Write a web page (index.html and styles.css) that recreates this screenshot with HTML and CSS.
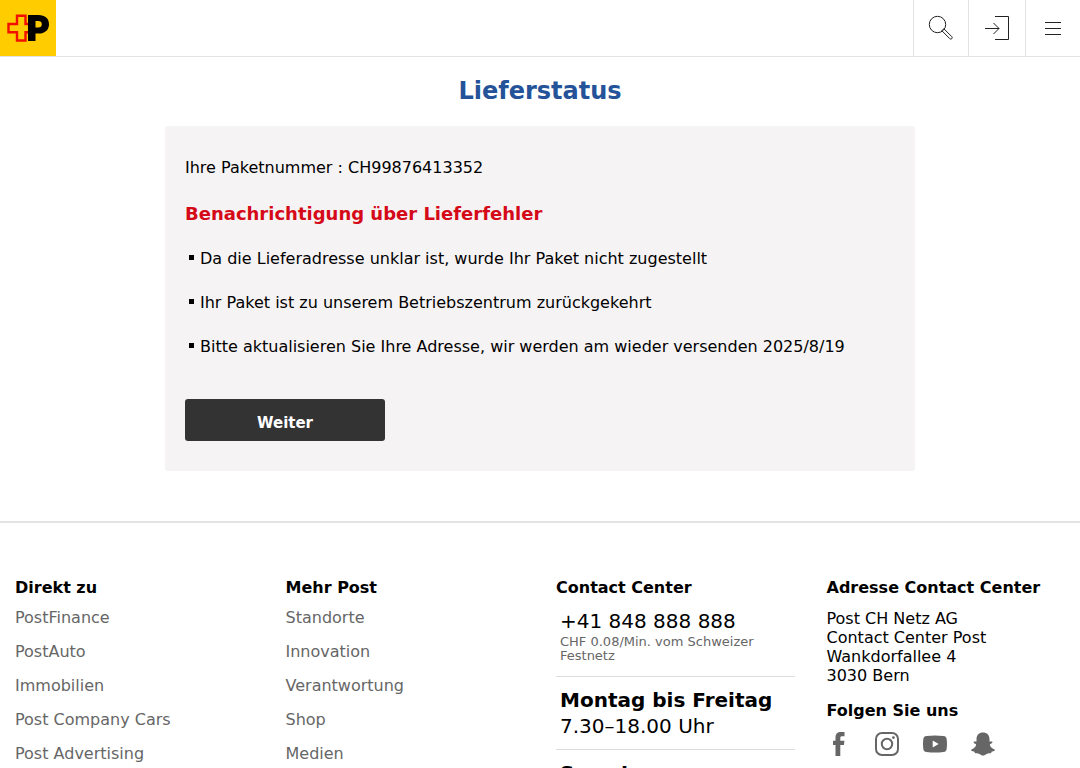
FILE: index.html
```html
<!DOCTYPE html>
<html lang="de">
<head>
<meta charset="UTF-8">
<meta name="viewport" content="width=device-width, initial-scale=1.0">
<title>Lieferstatus</title>
<link rel="stylesheet" href="styles.css">
</head>
<body>
<header class="header">
    <a class="logo" href="#" aria-label="Startseite">
        <svg width="56" height="56" viewBox="0 0 56 56">
            <path class="logo-cross" d="M28 24h-2.500v-8.200h-8.500V24H8.500v8.200H17v8.300h8.500v-8.300H28"/>
            <path d="M28 15h10.500c6.500 0 10.500 3.500 10.500 9.200S45 33.500 38.500 33.500H35.500V41H28zM35.500 21v6.500h2.700c2.300 0 3.600-1.200 3.600-3.300S40.500 21 38.200 21z" fill="#000" fill-rule="evenodd"/>
        </svg>
    </a>
    <nav class="tools">
        <button class="tool" type="button" aria-label="Suche">
            <svg width="32" height="32" viewBox="0 0 32 32">
                <circle cx="12.500" cy="12.500" r="8.200"/>
                <path d="M17 18.500l1.800-1.800 8 8c1.300 1.300-.7 3.300-2 2l-8-8z"/>
            </svg>
        </button>
        <button class="tool tool-login" type="button" aria-label="Login">
            <svg width="32" height="32" viewBox="0 0 32 32">
                <path d="M14 4.500h13.500v23H14M4 16.500h14M12.500 11l5.500 5.500-5.500 5.500"/>
            </svg>
        </button>
        <button class="tool" type="button" aria-label="Menü">
            <svg width="32" height="32" viewBox="0 0 32 32">
                <path d="M8 10.500h16M8 16.500h16M8 22.500h16"/>
            </svg>
        </button>
    </nav>
</header>

<main class="main">
    <h1 class="title">Lieferstatus</h1>
    <section class="card">
        <p class="number">Ihre Paketnummer : CH99876413352</p>
        <h2 class="error">Benachrichtigung über Lieferfehler</h2>
        <ul class="reasons">
            <li>Da die Lieferadresse unklar ist, wurde Ihr Paket nicht zugestellt</li>
            <li>Ihr Paket ist zu unserem Betriebszentrum zurückgekehrt</li>
            <li>Bitte aktualisieren Sie Ihre Adresse, wir werden am wieder versenden 2025/8/19</li>
        </ul>
        <button class="next" type="button">Weiter</button>
    </section>
</main>

<footer class="footer">
    <div class="column">
        <h3>Direkt zu</h3>
        <ul class="links">
            <li><a href="#">PostFinance</a></li>
            <li><a href="#">PostAuto</a></li>
            <li><a href="#">Immobilien</a></li>
            <li><a href="#">Post Company Cars</a></li>
            <li><a href="#">Post Advertising</a></li>
        </ul>
    </div>
    <div class="column">
        <h3>Mehr Post</h3>
        <ul class="links">
            <li><a href="#">Standorte</a></li>
            <li><a href="#">Innovation</a></li>
            <li><a href="#">Verantwortung</a></li>
            <li><a href="#">Shop</a></li>
            <li><a href="#">Medien</a></li>
        </ul>
    </div>
    <div class="column">
        <h3>Contact Center</h3>
        <div class="contact">
            <p>+41 848 888 888</p>
            <small>CHF 0.08/Min. vom Schweizer Festnetz</small>
        </div>
        <div class="contact">
            <strong>Montag bis Freitag</strong>
            <p>7.30–18.00 Uhr</p>
        </div>
        <div class="contact">
            <strong>Samstag</strong>
        </div>
    </div>
    <div class="column">
        <h3>Adresse Contact Center</h3>
        <address class="address">
            Post CH Netz AG<br>
            Contact Center Post<br>
            Wankdorfallee 4<br>
            3030 Bern
        </address>
        <h3>Folgen Sie uns</h3>
        <div class="social">
            <a href="#" aria-label="Facebook">
                <svg width="24" height="24" viewBox="0 0 24 24">
                    <path d="M8.500 24V13H6V8.800h2.500V5.500C8.500 1.800 10.500 0 14 0h3.500v4.200h-2.300c-1.500 0-1.900.6-1.900 1.900v2.700h4.100L17 13h-3.700v11z"/>
                </svg>
            </a>
            <a href="#" aria-label="Instagram">
                <svg width="24" height="24" viewBox="0 0 24 24">
                    <rect x="1" y="1" width="22" height="22" rx="6" fill="none" stroke="#666" stroke-width="2"/>
                    <circle cx="12" cy="12" r="5.200" fill="none" stroke="#666" stroke-width="2"/>
                    <circle cx="18.400" cy="5.600" r="1.400"/>
                </svg>
            </a>
            <a href="#" aria-label="YouTube">
                <svg width="24" height="24" viewBox="0 0 24 24">
                    <path fill-rule="evenodd" d="M3.500 4Q12 3 20.500 4 23.500 4.300 23.700 7.500q.6 4.500 0 9-.2 3.200-3.200 3.500-8.500 1-17 0Q.5 19.700.3 16.500q-.6-4.500 0-9Q.5 4.300 3.500 4zM9.700 8.500v7l6-3.500z"/>
                </svg>
            </a>
            <a href="#" aria-label="Snapchat">
                <svg width="24" height="24" viewBox="0 0 24 24">
                    <path d="M12 .5c4 0 6.500 2.700 6.500 6.500v2.500c.9.400 2-.6 2.800.3.600 1-.6 1.700-2.300 2.500-.6 1.200 1.300 4.200 4.500 5.200 1 .6.300 1.700-2.900 2.300-.4.500-.2 1.500-1 1.500-1.300 0-2.500-.4-4 .7-1.200.9-2.200 1.500-3.600 1.500s-2.400-.6-3.600-1.500c-1.500-1.100-2.700-.7-4-.7-.8 0-.6-1-1-1.500-3.200-.6-3.900-1.700-2.900-2.300 3.200-1 5.100-4 4.500-5.200-1.700-.8-2.900-1.500-2.300-2.500.8-.9 1.900.1 2.800-.3V7C5.500 3.200 8 .5 12 .5z"/>
                </svg>
            </a>
        </div>
    </div>
</footer>
</body>
</html>
```

FILE: styles.css
```css
* {
    box-sizing: border-box;
}
body {
    margin: 0;
    font-family: "DejaVu Sans", Verdana, sans-serif;
    font-size: 16px;
    color: #000;
    background-color: #fff;
}
h1, h2, h3, p, ul {
    margin: 0;
    padding: 0;
}
ul {
    list-style: none;
}

/* Header */
.header {
    display: flex;
    justify-content: space-between;
    height: 57px;
    border-bottom: 1px solid #e3e3e3;
}
.logo {
    width: 56px;
    height: 56px;
    background-color: #fc0;
}
.logo svg {
    display: block;
}
.logo-cross {
    fill: none;
    stroke: #f00f00;
    stroke-width: 2.4;
}
.tools {
    display: flex;
}
.tool {
    display: flex;
    align-items: center;
    justify-content: center;
    width: 55px;
    padding: 0;
    border: none;
    border-left: 1px solid #e3e3e3;
    background: none;
    cursor: pointer;
}
.tool-login {
    width: 57px;
}
.tool svg {
    fill: none;
    stroke: #222;
    stroke-width: 1;
}

/* Status */
.main {
    max-width: 750px;
    margin: 0 auto 50px;
}
.title {
    padding: 20px 0;
    font-size: 24px;
    line-height: 29px;
    text-align: center;
    color: #24539a;
}
.card {
    padding: 30px 20px;
    border-radius: 3px;
    background-color: #f6f3f4;
}
.number {
    line-height: 24px;
}
.error {
    margin: 20px 0 19px;
    font-size: 18px;
    line-height: 28px;
    color: #d50a18;
}
.reasons li {
    display: flex;
    gap: 6px;
    margin-bottom: 20px;
    padding-left: 4px;
    line-height: 24px;
}
.reasons li::before {
    content: "";
    width: 5px;
    height: 5px;
    margin-top: 8px;
    background-color: #000;
}
.next {
    display: block;
    width: 200px;
    height: 42px;
    margin-top: 40px;
    padding: 5px 0 0;
    border: none;
    border-radius: 3px;
    font-family: inherit;
    font-size: 15px;
    font-weight: bold;
    color: #fff;
    background-color: #333;
    cursor: pointer;
}

/* Footer */
.footer {
    display: grid;
    grid-template-columns: repeat(4, 1fr);
    gap: 32px;
    padding: 55px 15px 0;
    border-top: 2px solid #e3e3e3;
}
.column h3 {
    font-size: 16px;
    line-height: 20px;
}
.links {
    margin-top: 10px;
}
.links li {
    margin-bottom: 14px;
    line-height: 20px;
}
.links a {
    color: #666;
    text-decoration: none;
}
.contact {
    padding: 10px 4px;
    border-bottom: 1px solid #ddd;
    font-size: 20px;
    line-height: 26px;
}
.contact small {
    display: block;
    margin: 1px 0 3px;
    font-size: 13px;
    line-height: 14px;
    color: #666;
}
.contact:last-child {
    border: none;
}
.address {
    margin: 11px 0 16px;
    font-style: normal;
    line-height: 19px;
}
.social {
    display: flex;
    gap: 24px;
    margin-top: 11px;
}
.social svg {
    display: block;
    fill: #666;
}
```
